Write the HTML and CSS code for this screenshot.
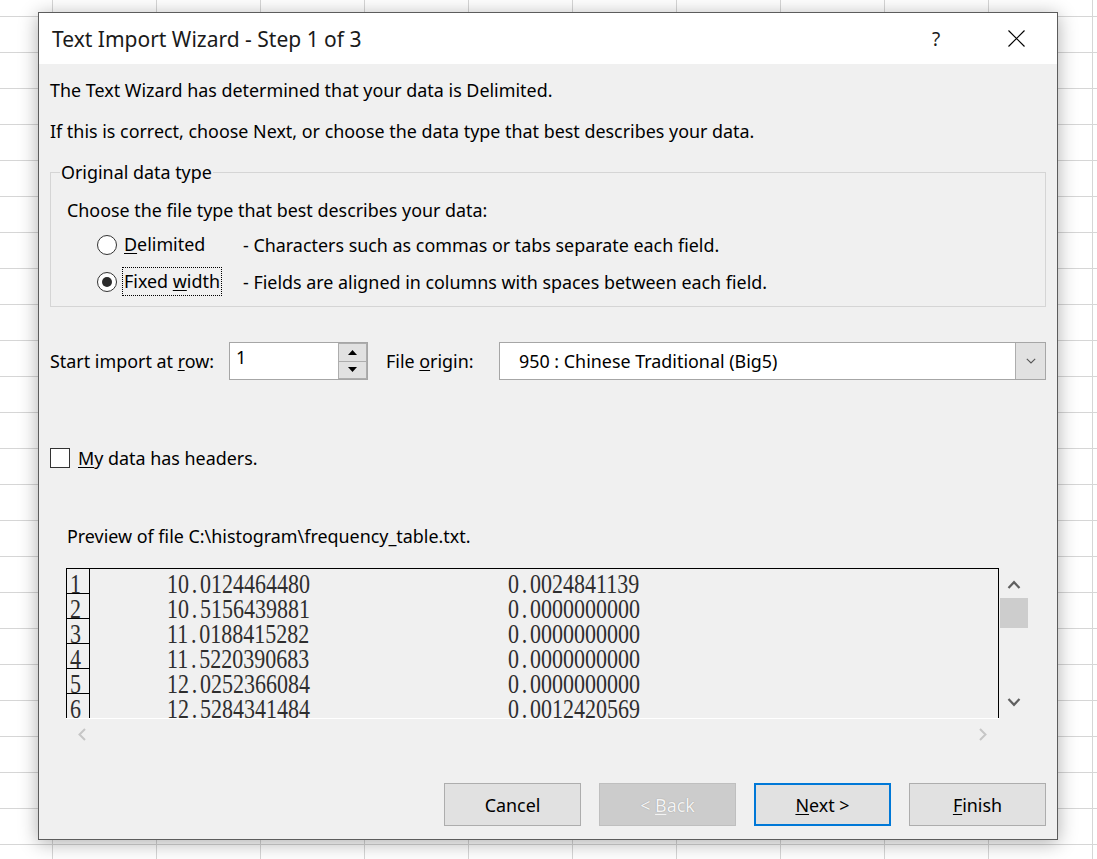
FILE: index.html
```html
<!DOCTYPE html>
<html>
<head>
<meta charset="utf-8">
<title>Text Import Wizard</title>
<link rel="stylesheet" href="styles.css">
</head>
<body>
<div class="dialog">
  <div class="titlebar">
    <span class="title">Text Import Wizard - Step 1 of 3</span>
    <span class="help">?</span>
    <span class="close"><svg width="17" height="17" viewBox="0 0 17 17"><path d="M0.5 0.5 L16.5 16.5 M16.5 0.5 L0.5 16.5" stroke="#000" stroke-width="1.2" fill="none"/></svg></span>
  </div>
  <div class="content">
    <p class="line first">The Text Wizard has determined that your data is Delimited.</p>
    <p class="line second">If this is correct, choose Next, or choose the data type that best describes your data.</p>

    <fieldset class="group">
      <legend>Original data type</legend>
      <div class="choose">Choose the file type that best describes your data:</div>
      <div class="radio-row">
        <span class="radio"></span>
        <span class="rl"><span class="rtext"><u>D</u>elimited</span></span>
        <span class="desc">- Characters such as commas or tabs separate each field.</span>
      </div>
      <div class="radio-row">
        <span class="radio on"></span>
        <span class="rl"><span class="rtext focus">Fixed <u>w</u>idth</span></span>
        <span class="desc">- Fields are aligned in columns with spaces between each field.</span>
      </div>
    </fieldset>

    <div class="import-row">
      <span class="lbl-row">Start import at <u>r</u>ow:</span>
      <div class="spin">
        <span class="val">1</span>
        <div class="spin-btns">
          <span class="sb"><svg width="9" height="5" viewBox="0 0 9 5"><path d="M0 5 L4.5 0 L9 5 Z" fill="#000"/></svg></span>
          <span class="sb"><svg width="9" height="5" viewBox="0 0 9 5"><path d="M0 0 L4.5 5 L9 0 Z" fill="#000"/></svg></span>
        </div>
      </div>
      <span class="lbl-origin">File <u>o</u>rigin:</span>
      <div class="combo">
        <span class="combo-txt">950 : Chinese Traditional (Big5)</span>
        <span class="combo-arr"><svg width="10" height="6" viewBox="0 0 10 6"><path d="M0.8 0.8 L5 5 L9.2 0.8" stroke="#555" stroke-width="1.1" fill="none"/></svg></span>
      </div>
    </div>

    <div class="check-row">
      <span class="cbox"></span>
      <span><u>M</u>y data has headers.</span>
    </div>

    <div class="preview-label">Preview of file C:\histogram\frequency_table.txt.</div>

    <div class="preview">
      <div class="pv-main">
        <div class="pv-grid">
          <div class="row"><span class="rn"><span class="t">1</span></span><span class="c1"><span class="t">10<i>.</i>0124464480</span></span><span class="c2"><span class="t">0<i>.</i>0024841139</span></span></div>
          <div class="row"><span class="rn"><span class="t">2</span></span><span class="c1"><span class="t">10<i>.</i>5156439881</span></span><span class="c2"><span class="t">0<i>.</i>0000000000</span></span></div>
          <div class="row"><span class="rn"><span class="t">3</span></span><span class="c1"><span class="t">11<i>.</i>0188415282</span></span><span class="c2"><span class="t">0<i>.</i>0000000000</span></span></div>
          <div class="row"><span class="rn"><span class="t">4</span></span><span class="c1"><span class="t">11<i>.</i>5220390683</span></span><span class="c2"><span class="t">0<i>.</i>0000000000</span></span></div>
          <div class="row"><span class="rn"><span class="t">5</span></span><span class="c1"><span class="t">12<i>.</i>0252366084</span></span><span class="c2"><span class="t">0<i>.</i>0000000000</span></span></div>
          <div class="row"><span class="rn"><span class="t">6</span></span><span class="c1"><span class="t">12<i>.</i>5284341484</span></span><span class="c2"><span class="t">0<i>.</i>0012420569</span></span></div>
        </div>
        <div class="vscroll">
          <svg class="vs-up" width="14" height="9" viewBox="0 0 14 9"><path d="M1.5 8 L7 2.2 L12.5 8" stroke="#606060" stroke-width="2.2" fill="none"/></svg>
          <span class="thumb"></span>
          <span class="vs-space"></span>
          <svg class="vs-down" width="14" height="9" viewBox="0 0 14 9"><path d="M1.5 1 L7 6.8 L12.5 1" stroke="#606060" stroke-width="2.2" fill="none"/></svg>
        </div>
      </div>
      <div class="hscroll">
        <svg width="10" height="13" viewBox="0 0 10 13"><path d="M8 1 L2.5 6.5 L8 12" stroke="#c6c6c6" stroke-width="2" fill="none"/></svg>
        <svg width="10" height="13" viewBox="0 0 10 13"><path d="M2 1 L7.5 6.5 L2 12" stroke="#c6c6c6" stroke-width="2" fill="none"/></svg>
      </div>
    </div>

    <div class="buttons">
      <span class="btn"><span>Cancel</span></span>
      <span class="btn disabled"><span>&lt; <u>B</u>ack</span></span>
      <span class="btn default"><span><u>N</u>ext &gt;</span></span>
      <span class="btn"><span><u>F</u>inish</span></span>
    </div>
  </div>
</div>
</body>
</html>
```

FILE: styles.css
```css
* { box-sizing: border-box; }
html, body { margin: 0; padding: 0; }
body {
  width: 1097px;
  height: 859px;
  overflow: hidden;
  padding: 12px 0 0 38px;
  background-color: #fff;
  background-image:
    linear-gradient(to right, #d6d6d6 1px, transparent 1px),
    linear-gradient(to bottom, #d6d6d6 1px, transparent 1px);
  background-size: 104px 36px;
  background-position: 52px 16px;
  font-family: "Noto Sans", "Open Sans", sans-serif;
  font-size: 17.9px;
  color: #000;
}
.dialog {
  width: 1020px;
  height: 828px;
  border: 1px solid #5c5c5c;
  background: #f0f0f0;
  box-shadow: 0 3px 18px rgba(0, 0, 0, 0.32);
  display: flex;
  flex-direction: column;
}
.titlebar {
  flex: none;
  height: 51px;
  background: #fff;
  display: flex;
  align-items: center;
  padding-left: 13px;
}
.title { flex: 1; font-size: 21px; color: #1a1a1a; }
.help { width: 46px; text-align: center; font-size: 19px; margin-right: 34px; color: #1a1a1a; }
.close { width: 46px; margin-right: 18px; display: flex; justify-content: center; align-items: center; }
.close svg { display: block; }

.content { flex: 1; padding: 0 11px 0 11px; }
.line { margin: 0; line-height: 24px; }
.first { margin-top: 14px; }
.second { margin-top: 17px; }

.group {
  margin: 17px 0 0;
  padding: 14px 0 10px 16px;
  border: 1px solid #d5d5d5;
  min-width: 0;
}
.group legend {
  padding: 0 1px;
  margin-left: -7px;
  line-height: 24px;
}
.choose { line-height: 24px; }
.radio-row {
  display: flex;
  align-items: center;
  height: 29px;
  margin-top: 8px;
}
.radio {
  flex: none;
  width: 20px;
  height: 20px;
  margin-left: 30px;
  border: 1px solid #333;
  border-radius: 50%;
  background: #fff;
  display: flex;
  align-items: center;
  justify-content: center;
}
.radio.on::after {
  content: "";
  width: 10px;
  height: 10px;
  border-radius: 50%;
  background: #2b2b2b;
}
.rl { flex: none; width: 121px; margin-left: 5px; }
.rtext {
  display: inline-block;
  border: 1px dotted transparent;
  padding: 1px 1px;
  line-height: 25px;
}
.rtext.focus { border-color: #000; }

.import-row {
  display: flex;
  align-items: center;
  height: 38px;
  margin-top: 35px;
}
.lbl-row { flex: none; width: 179px; }
.spin {
  flex: none;
  width: 139px;
  height: 38px;
  border: 1px solid #a6a6a6;
  background: #fff;
  display: flex;
}
.spin .val { flex: 1; padding: 2px 0 0 6px; line-height: 24px; }
.spin-btns { width: 29px; display: flex; flex-direction: column; }
.sb {
  flex: 1;
  background: #e1e1e1;
  border: 1px solid #adadad;
  display: flex;
  align-items: center;
  justify-content: center;
}
.sb + .sb { border-top: none; }
.sb svg { display: block; }
.lbl-origin { flex: none; margin-left: 18px; width: 113px; }
.combo {
  flex: 1;
  height: 38px;
  border: 1px solid #a6a6a6;
  background: #fff;
  display: flex;
  align-items: center;
}
.combo-txt { flex: 1; padding-left: 19px; }
.combo-arr {
  width: 30px;
  height: 100%;
  background: #e1e1e1;
  border-left: 1px solid #adadad;
  display: flex;
  align-items: center;
  justify-content: center;
}
.combo-arr svg { display: block; }

.check-row {
  display: flex;
  align-items: center;
  height: 24px;
  margin-top: 66px;
}
.cbox {
  flex: none;
  width: 20px;
  height: 20px;
  border: 1px solid #333;
  background: #fff;
  margin-right: 8px;
}

.preview-label { margin: 54px 0 0 17px; line-height: 24px; }

.preview { margin: 20px 0 0 16px; }
.pv-main { display: flex; height: 150px; }
.pv-grid {
  width: 933px;
  height: 150px;
  border: 1px solid #000;
  border-bottom: none;
  overflow: hidden;
  background: #f0f0f0;
}
.row { display: flex; height: 25px; }
.rn {
  flex: none;
  width: 23px;
  height: 25px;
  border-right: 1px solid #000;
  border-bottom: 1px solid #000;
  padding-left: 3px;
}
.c1 { flex: none; margin-left: 77px; width: 341px; height: 25px; }
.c2 { flex: none; height: 25px; }
.t {
  display: inline-block;
  vertical-align: top;
  font-family: "Liberation Serif", "Times New Roman", serif;
  font-size: 22px;
  line-height: 24px;
  color: #2e2e2e;
  white-space: pre;
  transform: translateY(5px) scaleY(1.21);
  transform-origin: 0 19px;
}
.t i {
  display: inline-block;
  font-style: normal;
  width: 11px;
  text-align: center;
}
.vscroll {
  flex: none;
  width: 28px;
  margin-left: 1px;
  display: flex;
  flex-direction: column;
  align-items: center;
  padding-top: 12px;
  padding-bottom: 11px;
}
.vscroll svg { display: block; flex: none; }
.thumb { flex: none; width: 28px; height: 30px; margin-top: 9px; background: #cdcdcd; }
.vs-space { flex: 1; }

.hscroll {
  width: 933px;
  height: 31px;
  border-top: 1px solid #fff;
  display: flex;
  justify-content: space-between;
  align-items: center;
  padding: 0 11px 0 11px;
}
.hscroll svg { display: block; }

.buttons {
  display: flex;
  justify-content: flex-end;
  gap: 18px;
  margin-top: 34px;
}
.btn {
  width: 137px;
  height: 43px;
  background: #e1e1e1;
  border: 1px solid #adadad;
  display: flex;
  align-items: center;
  justify-content: center;
}
.btn.default { border: 2px solid #0078d7; }
.btn.disabled {
  background: #cccccc;
  border-color: #bfbfbf;
  color: #f4f4f4;
  text-shadow: 0 0 1px #8c8c8c;
}
u { text-underline-offset: 2px; }
```
